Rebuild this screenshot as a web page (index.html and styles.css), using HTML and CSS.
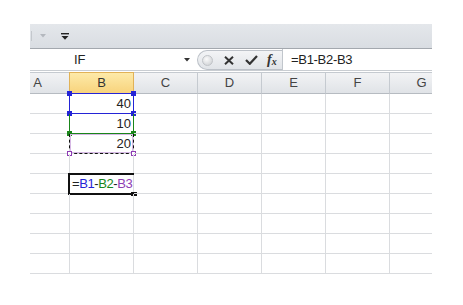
FILE: index.html
```html
<!DOCTYPE html>
<html lang="en">
<head>
  <meta charset="UTF-8">
  <meta name="viewport" content="width=device-width, initial-scale=1.0">
  <title>Excel - formula reference</title>
  <link rel="stylesheet" href="styles.css">
</head>
<body>
  <div class="excel">
    <!-- quick access toolbar -->
    <div class="qat">
      <span class="qat-sep"></span>
      <svg class="qat-arrow" width="6" height="4" viewBox="0 0 6 4"><path d="M0 0h6L3 3.5z" fill="#b4b8be"/></svg>
      <svg class="qat-custom" width="8" height="7" viewBox="0 0 8 7"><rect x="0" y="0" width="8" height="1.4" fill="#222"/><path d="M0.5 3h7L4 6.8z" fill="#222"/></svg>
    </div>

    <!-- formula bar -->
    <div class="fbar">
      <div class="namebox">
        <span>IF</span>
        <svg width="6" height="4" viewBox="0 0 6 4"><path d="M0 0h6L3 3.5z" fill="#333"/></svg>
      </div>
      <div class="fbtns">
        <span class="knob"></span>
        <svg class="fb-icon" width="10" height="9" viewBox="0 0 10 9"><path d="M1 0.8l8 7.4M9 0.8l-8 7.4" stroke="#333" stroke-width="2"/></svg>
        <svg class="fb-icon" width="13" height="10" viewBox="0 0 13 10"><path d="M1 5l3.8 3.8L12 1" stroke="#333" stroke-width="2.2" fill="none"/></svg>
        <span class="fx">f<sub>x</sub></span>
      </div>
      <div class="finput">=B1-B2-B3</div>
    </div>

    <!-- sheet -->
    <div class="sheet">
      <div class="grid">
        <div class="hd">A</div>
        <div class="hd sel">B</div>
        <div class="hd">C</div>
        <div class="hd">D</div>
        <div class="hd">E</div>
        <div class="hd">F</div>
        <div class="hd">G</div>

        <div class="c"></div>
        <div class="c num">40
          <div class="ref ref-blue"><i class="h tl"></i><i class="h tr"></i><i class="h bl"></i><i class="h br"></i></div>
        </div>
        <div class="c"></div><div class="c"></div><div class="c"></div><div class="c"></div><div class="c"></div>

        <div class="c"></div>
        <div class="c num">10
          <div class="ref ref-green"><i class="h bl"></i><i class="h br"></i></div>
        </div>
        <div class="c"></div><div class="c"></div><div class="c"></div><div class="c"></div><div class="c"></div>

        <div class="c"></div>
        <div class="c num">20
          <div class="ref ref-purple"><i class="h bl"></i><i class="h br"></i></div>
        </div>
        <div class="c"></div><div class="c"></div><div class="c"></div><div class="c"></div><div class="c"></div>

        <div class="c"></div><div class="c"></div><div class="c"></div><div class="c"></div><div class="c"></div><div class="c"></div><div class="c"></div>

        <div class="c"></div>
        <div class="c edit">=<span class="r1">B1</span>-<span class="r2">B2</span>-<span class="r3">B3</span>
          <div class="active"><i class="fill"></i></div>
        </div>
        <div class="c"></div><div class="c"></div><div class="c"></div><div class="c"></div><div class="c"></div>

        <div class="c"></div><div class="c"></div><div class="c"></div><div class="c"></div><div class="c"></div><div class="c"></div><div class="c"></div>
        <div class="c"></div><div class="c"></div><div class="c"></div><div class="c"></div><div class="c"></div><div class="c"></div><div class="c"></div>
        <div class="c"></div><div class="c"></div><div class="c"></div><div class="c"></div><div class="c"></div><div class="c"></div><div class="c"></div>
        <div class="c"></div><div class="c"></div><div class="c"></div><div class="c"></div><div class="c"></div><div class="c"></div><div class="c"></div>
      </div>
    </div>
  </div>
</body>
</html>
```

FILE: styles.css
```css
body {
  margin: 0;
  background: #fff;
  font-family: "Liberation Sans", Arial, sans-serif;
  font-size: 13px;
  color: #222;
}
.excel {
  margin: 24px 0 0 30px;
  width: 402px;
  overflow: hidden;
}

/* quick access toolbar */
.qat {
  height: 24px;
  background: linear-gradient(#e4e7eb, #d9dde2);
  border-bottom: 1px solid #a3a8ae;
  display: flex;
  align-items: center;
}
.qat-sep {
  width: 1px;
  height: 10px;
  background: #c4c8cd;
  margin-left: 1px;
}
.qat-arrow {
  margin-left: 8px;
}
.qat-custom {
  margin-left: 15px;
}

/* formula bar */
.fbar {
  display: flex;
  height: 21px;
  border-bottom: 1px solid #c9cdd2;
  margin-bottom: 1px;
}
.namebox {
  width: 167px;
  display: flex;
  align-items: center;
  justify-content: space-between;
  padding: 0 7px 0 44px;
  box-sizing: border-box;
}
.fbtns {
  width: 85px;
  box-sizing: border-box;
  margin-top: 1px;
  border: 1px solid #bcc1c8;
  border-right: 0;
  border-radius: 11px 0 0 11px;
  background: linear-gradient(#f3f4f6, #e1e4e8);
  display: flex;
  align-items: center;
  padding-left: 4px;
}
.knob {
  width: 9px;
  height: 9px;
  border-radius: 50%;
  background: radial-gradient(circle at 40% 35%, #fafafa, #c9ccd0);
  border: 1px solid #c0c3c7;
}
.fb-icon {
  margin-left: 11px;
}
.fx {
  margin-left: 9px;
  font-family: "Liberation Serif", "Times New Roman", serif;
  font-style: italic;
  font-weight: bold;
  font-size: 14px;
  color: #333;
}
.fx sub {
  font-size: 10px;
  vertical-align: -1px;
}
.finput {
  flex: 1;
  border-left: 1px solid #c1c6cc;
  display: flex;
  align-items: center;
  padding-left: 8px;
  letter-spacing: -0.3px;
}

/* sheet */
.grid {
  margin-left: -24px;
  display: grid;
  grid-template-columns: repeat(7, 64px);
  grid-template-rows: 22px repeat(9, 20px);
}
.hd {
  box-sizing: border-box;
  background: linear-gradient(#f2f3f5, #e0e3e7);
  border-top: 1px solid #c5cad0;
  border-right: 1px solid #c5cad0;
  border-bottom: 1px solid #b6bbc1;
  text-align: center;
  line-height: 20px;
  color: #444;
}
.hd.sel {
  background: linear-gradient(#fdeaa9, #f8d37c);
  border-color: #e1b257;
  box-shadow: -1px 0 0 #e1b257;
  color: #333;
}
.c {
  box-sizing: border-box;
  position: relative;
  border-right: 1px solid #dadcdf;
  border-bottom: 1px solid #dadcdf;
  padding: 0 2px 0 3px;
  line-height: 20px;
}
.num {
  text-align: right;
}

/* range references */
.ref {
  position: absolute;
  left: -1px;
  top: -1px;
  width: 65px;
  height: 21px;
  box-sizing: border-box;
}
.ref-blue {
  border: 1px solid #2424d6;
}
.ref-green {
  top: 0;
  height: 20px;
  border: 1px solid #1a861a;
  border-top: 0;
}
.ref-purple {
  top: 0;
  height: 20px;
  border: 1px dashed #111;
  border-top: 0;
  box-shadow: inset 0 0 0 1px #d6b8e4;
}
.h {
  position: absolute;
  width: 5px;
  height: 5px;
  box-sizing: border-box;
}
.ref-blue .h { background: #2424d6; }
.ref-green .h { background: #1a861a; }
.ref-purple .h { background: #fff; border: 1px solid #8e3db4; }
.tl { left: -3px; top: -3px; }
.tr { right: -3px; top: -3px; }
.bl { left: -3px; bottom: -3px; }
.br { right: -3px; bottom: -3px; }

/* cell being edited */
.edit {
  padding-left: 2px;
  white-space: nowrap;
  letter-spacing: -0.4px;
}
.r1 { color: #2424d6; }
.r2 { color: #1a861a; }
.r3 { color: #8e3db4; }
.active {
  position: absolute;
  left: -2px;
  top: -1px;
  width: 66px;
  height: 22px;
  box-sizing: border-box;
  border: 2px solid #111;
  border-right: 0;
}
.fill {
  position: absolute;
  right: -3px;
  bottom: -3px;
  width: 6px;
  height: 4px;
  background: #111;
}
```
